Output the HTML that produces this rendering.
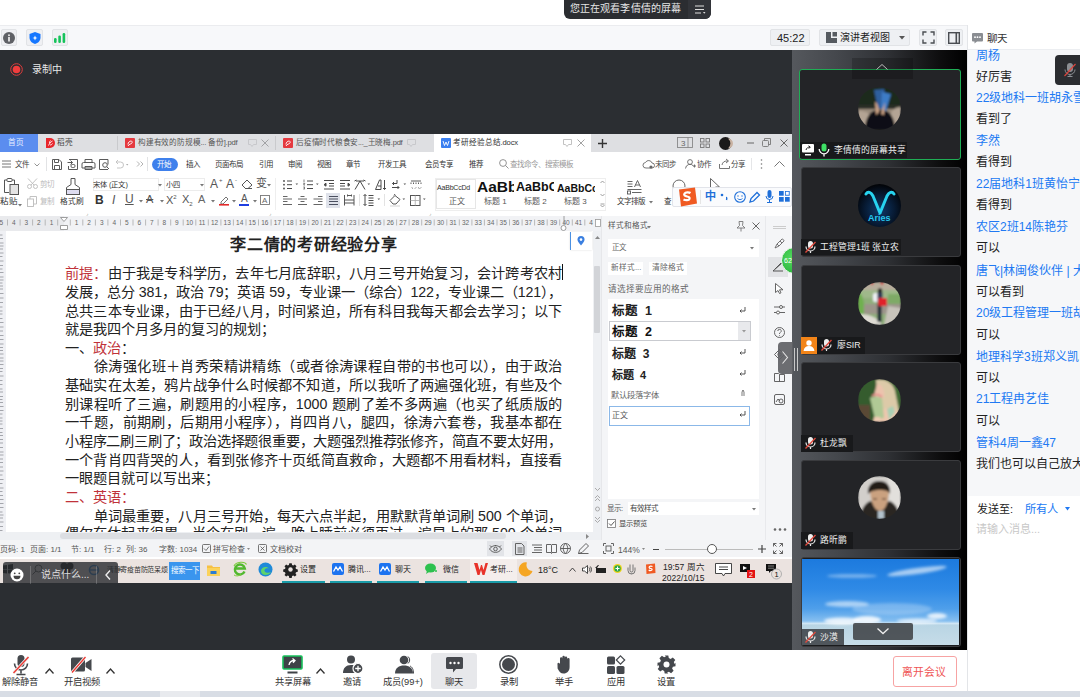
<!DOCTYPE html>
<html lang="zh-CN"><head><meta charset="utf-8">
<style>
*{margin:0;padding:0;box-sizing:border-box}
html,body{width:1080px;height:697px;overflow:hidden;background:#fff;font-family:"Liberation Sans",sans-serif;position:relative}
.a{position:absolute}
.t{position:absolute;white-space:nowrap;line-height:1}
svg{position:absolute;overflow:visible}
.btn{position:absolute;background:#eef0f3;border:1px solid #e1e3e6;border-radius:2px}
.cb{position:absolute;left:976px;font-size:12px;white-space:nowrap;line-height:1;color:#2079f3}
.ck{position:absolute;left:976px;font-size:12px;white-space:nowrap;line-height:1;color:#222}
.bl{position:absolute;font-size:9.3px;color:#333;white-space:nowrap;line-height:1}
.dl{position:absolute;left:65px;width:497px;font-family:"Liberation Sans",sans-serif;font-size:14.2px;line-height:1;color:#222;white-space:nowrap;text-align:justify;text-align-last:justify}
</style></head><body>
<!-- ===== top white band ===== -->
<div class="a" style="left:0;top:0;width:1080px;height:25px;background:#fff"></div>
<!-- tooltip -->
<div class="a" style="left:564px;top:0;width:147px;height:19px;background:#2b2d31;border-radius:0 0 6px 6px"></div>
<div class="a" style="left:688px;top:0;width:23px;height:19px;background:#323439;border-radius:0 0 6px 0"></div>
<div class="t" style="left:570px;top:4px;font-size:10px;letter-spacing:0.1px;color:#e6e6e6">您正在观看李倩倩的屏幕</div>
<svg style="left:695px;top:5px" width="12" height="10"><path d="M0 1h9M0 4.5h9M0 8h6" stroke="#ddd" stroke-width="1.2"/><path d="M8 7l2.5 0-1.25 1.8z" fill="#ddd"/></svg>

<!-- ===== toolbar row ===== -->
<div class="a" style="left:0;top:25px;width:968px;height:25px;background:#f7f8fa;border-top:1px solid #ebecef"></div>
<div class="btn" style="left:1px;top:29px;width:16px;height:17px;background:#eff0f3"></div>
<div class="btn" style="left:26px;top:29px;width:17px;height:17px;background:#eff0f3"></div>
<div class="btn" style="left:52px;top:29px;width:16px;height:17px;background:#eff0f3"></div>
<svg style="left:3px;top:31.5px" width="12" height="12"><circle cx="6" cy="6" r="6" fill="#5f6166"/><rect x="5.1" y="5" width="1.8" height="4.5" fill="#e8e8e8"/><circle cx="6" cy="3.2" r="1" fill="#e8e8e8"/></svg>
<svg style="left:29px;top:31.5px" width="12" height="12"><path d="M6 0L0.5 2v3.5C0.5 9 3 11 6 12c3-1 5.5-3 5.5-6.5V2z" fill="#1677ff"/><path d="M6 3.5L6.8 5.6 8.6 6 6.8 6.6 6 8.5 5.2 6.6 3.4 6 5.2 5.6z" fill="#fff"/></svg>
<svg style="left:54px;top:33px" width="12" height="10"><rect x="0" y="5" width="2.6" height="5" rx="1.2" fill="#16c35b"/><rect x="4.3" y="2.5" width="2.6" height="7.5" rx="1.2" fill="#16c35b"/><rect x="8.6" y="0" width="2.6" height="10" rx="1.2" fill="#16c35b"/></svg>

<div class="btn" style="left:770px;top:29px;width:40px;height:17px"></div>
<div class="t" style="left:777px;top:32.5px;font-size:11px;color:#222">45:22</div>
<div class="btn" style="left:819px;top:29px;width:91px;height:17px"></div>
<svg style="left:826px;top:32px" width="11" height="11"><path d="M0 0h5v6h6v5H0z" fill="#555a60"/><rect x="6.5" y="0" width="4.5" height="4.5" fill="#555a60"/></svg>
<div class="t" style="left:840px;top:32.5px;font-size:10px;color:#222">演讲者视图</div>
<svg style="left:899px;top:36px" width="6" height="4"><path d="M0 0h6L3 3.5z" fill="#555"/></svg>
<div class="btn" style="left:919px;top:29px;width:18px;height:17px"></div>
<svg style="left:922.5px;top:32px" width="11" height="11"><path d="M0 3.5V0h3.5M7.5 0H11v3.5M11 7.5V11H7.5M3.5 11H0V7.5" fill="none" stroke="#4a4d52" stroke-width="1.4"/></svg>
<div class="btn" style="left:945px;top:29px;width:18px;height:17px"></div>
<svg style="left:948px;top:31.5px" width="12" height="12"><rect x="0.7" y="0.7" width="10.6" height="10.6" fill="none" stroke="#4a4d52" stroke-width="1.4"/><rect x="7.5" y="0.7" width="1.6" height="10.6" fill="#4a4d52"/></svg>

<!-- ===== dark stage ===== -->
<div class="a" style="left:0;top:50px;width:792px;height:600px;background:#2b2e32"></div>
<svg style="left:10px;top:63px" width="13" height="13"><circle cx="6.5" cy="6.5" r="5.8" fill="none" stroke="#e23c3c" stroke-width="1"/><circle cx="6.5" cy="6.5" r="3.8" fill="#f03d3d"/></svg>
<div class="t" style="left:32px;top:65px;font-size:10px;color:#e8e8e8">录制中</div>

<!-- ===== video column ===== -->
<div class="a" style="left:792px;top:50px;width:175px;height:600px;background:linear-gradient(90deg,#55585d 0%,#45484d 25%,#2e3034 55%,#0d0d0e 85%,#000 100%)"></div>

<!-- ===== WPS (shared screen) ===== -->
<div id="wps" class="a" style="left:0;top:134px;width:792px;height:449px;background:#fff;overflow:hidden"></div>
<!-- WPS tab bar -->
<div class="a" style="left:0;top:134px;width:792px;height:18px;background:#dedfe2"></div>
<div class="a" style="left:0;top:134px;width:38px;height:18px;background:#5b8def"></div>
<div class="t" style="left:8px;top:139px;font-size:7.6px;color:#e9efff">首页</div>
<svg style="left:46px;top:138px" width="10" height="10"><path d="M0 0h4a5 5 0 0 1 0 10H0z" fill="#e8262c"/><path d="M2.5 7.5c1-2 2-3.5 4-4.5M3.5 5c0-1 .5-2 1-2.5M4 7c1 0 2-.5 2.5-1.5" stroke="#fff" stroke-width="0.9" fill="none"/></svg>
<div class="t" style="left:57px;top:139px;font-size:7.6px;color:#444">稻壳</div>
<div class="a" style="left:117px;top:136px;width:1px;height:14px;background:#c9cacd"></div>
<svg style="left:125px;top:138px" width="10" height="10"><rect width="10" height="10" rx="1" fill="#e5393f"/><path d="M3 6.5c0-2 1.5-3.5 3-3.5 1 0 1.5 1 1 2S4 6 3 8" stroke="#fff" stroke-width="0.9" fill="none"/></svg>
<div class="t" style="left:138px;top:139px;font-size:7.6px;letter-spacing:-0.2px;color:#555">构建有效的防规模... 备份].pdf</div>
<svg style="left:248px;top:139px" width="9" height="8"><path d="M0.5 0.5h8v5h-3l-1.5 2-1.5-2h-2z" fill="none" stroke="#c4c5c8" stroke-width="0.9"/></svg>
<svg style="left:261px;top:139px" width="8" height="8"><path d="M0.5 0.5l7 7M7.5 0.5l-7 7" stroke="#9a9b9e" stroke-width="0.9"/></svg>
<div class="a" style="left:275px;top:136px;width:1px;height:14px;background:#c9cacd"></div>
<svg style="left:283px;top:138px" width="10" height="10"><rect width="10" height="10" rx="1" fill="#e5393f"/><path d="M3 6.5c0-2 1.5-3.5 3-3.5 1 0 1.5 1 1 2S4 6 3 8" stroke="#fff" stroke-width="0.9" fill="none"/></svg>
<div class="t" style="left:296px;top:139px;font-size:7.6px;letter-spacing:-0.25px;color:#555">后疫情时代粮食安..._王晓梅.pdf</div>
<svg style="left:407px;top:139px" width="9" height="8"><path d="M0.5 0.5h8v5h-3l-1.5 2-1.5-2h-2z" fill="none" stroke="#c4c5c8" stroke-width="0.9"/></svg>
<div class="a" style="left:434px;top:134px;width:157px;height:18px;background:#fff"></div>
<svg style="left:441px;top:138px" width="10" height="10"><rect width="10" height="10" rx="1" fill="#3a7ff0"/><path d="M2 3l1.5 4.5L5 4l1.5 3.5L8 3" stroke="#fff" stroke-width="0.9" fill="none"/></svg>
<div class="t" style="left:453px;top:139px;font-size:7.6px;letter-spacing:-0.1px;color:#333">考研经验总结.docx</div>
<svg style="left:563px;top:139px" width="9" height="8"><path d="M0.5 0.5h8v5h-3l-1.5 2-1.5-2h-2z" fill="none" stroke="#bbb" stroke-width="0.9"/></svg>
<svg style="left:577px;top:139px" width="8" height="8"><path d="M0.5 0.5l7 7M7.5 0.5l-7 7" stroke="#999" stroke-width="0.9"/></svg>
<svg style="left:598px;top:139px" width="9" height="9"><path d="M4.5 0v9M0 4.5h9" stroke="#333" stroke-width="1.4"/></svg>
<svg style="left:677px;top:137px" width="16" height="11"><rect x="0.5" y="0.5" width="15" height="10" fill="none" stroke="#888" stroke-width="0.9"/><path d="M11 0.5v10" stroke="#888" stroke-width="0.9"/><text x="4" y="8.5" font-size="8" fill="#666" font-family="Liberation Sans">3</text></svg>
<svg style="left:700px;top:138px" width="10" height="10"><rect x="0.5" y="0.5" width="3.5" height="3.5" fill="none" stroke="#777" stroke-width="0.9"/><rect x="6" y="0.5" width="3.5" height="3.5" fill="none" stroke="#777" stroke-width="0.9"/><rect x="0.5" y="6" width="3.5" height="3.5" fill="none" stroke="#777" stroke-width="0.9"/><rect x="6" y="6" width="3.5" height="3.5" fill="none" stroke="#777" stroke-width="0.9"/></svg>
<svg style="left:718.5px;top:136.5px" width="13" height="13"><circle cx="6.5" cy="6.5" r="6.5" fill="#1b1a1a"/><path d="M9 1.5a6.5 6.5 0 0 1 0 10a5 5 0 0 0 0-10z" fill="#c9b3a3"/></svg>
<svg style="left:747px;top:142px" width="7" height="2"><path d="M0 1h7" stroke="#666" stroke-width="1"/></svg>
<svg style="left:762px;top:138px" width="9" height="9"><rect x="0.5" y="2.5" width="6" height="6" rx="1" fill="none" stroke="#777" stroke-width="0.9"/><path d="M2.5 2.5v-2h6v6h-2" fill="none" stroke="#777" stroke-width="0.9"/></svg>
<svg style="left:780px;top:138.5px" width="8" height="8"><path d="M0.5 0.5l7 7M7.5 0.5l-7 7" stroke="#666" stroke-width="1"/></svg>

<!-- menu row -->
<svg style="left:2px;top:160px" width="9" height="8"><path d="M0 1h9M0 4h9M0 7h9" stroke="#666" stroke-width="0.9"/></svg>
<div class="t" style="left:15px;top:160.5px;font-size:7.5px;color:#444">文件</div>
<svg style="left:34px;top:163px" width="6" height="4"><path d="M0.5 0.5l2.5 2.5 2.5-2.5" stroke="#888" stroke-width="0.9" fill="none"/></svg>
<div class="a" style="left:46px;top:157px;width:1px;height:14px;background:#e2e3e5"></div>
<svg style="left:50px;top:158px" width="95" height="13" fill="none" stroke="#5a5a5a" stroke-width="1">
<path d="M2.5 1.5h6.5l2.5 2.5v7.5h-9z M4.5 1.5v3h4v-3 M4.5 11.5v-4h5v4"/>
<path d="M19 1.5h8.5v10h-9v-3.5M17.5 4.5h5M20.5 2.5l2 2-2 2"/><rect x="21" y="6.5" width="4" height="3" rx="1.3"/>
<path d="M33.5 4.5h10a1.5 1.5 0 0 1 1.5 1.5v4h-13v-4a1.5 1.5 0 0 1 1.5-1.5z M35 4.5V1.5h7v3 M35 8.5h7v3h-7z"/>
<path d="M58 11.5h-8.5v-10h8.5v5"/><circle cx="55" cy="7" r="2.3"/><path d="M56.7 8.7l2.3 2.3"/>
<path d="M66 4h4.5a3 3 0 0 1 0 6H67M66 4l2-2M66 4l2 2" stroke="#c5c5c5"/>
<path d="M76 6h2.4l-1.2 1.5z" fill="#aaa" stroke="none"/>
<path d="M87 3.5l2.5 2.5-2.5 2.5M90.5 3.5L93 6l-2.5 2.5" stroke="#aaa" stroke-width="0.9"/>
</svg>
<div class="a" style="left:147px;top:157px;width:1px;height:14px;background:#e2e3e5"></div>
<div class="a" style="left:152px;top:158px;width:26px;height:13px;background:#3e80ec;border-radius:7px"></div>
<div class="t" style="left:157px;top:161px;font-size:7.5px;color:#fff">开始</div>
<div class="t" style="left:186px;top:161px;font-size:7.5px;color:#333">插入</div>
<div class="t" style="left:215px;top:161px;font-size:7.5px;color:#333">页面布局</div>
<div class="t" style="left:259px;top:161px;font-size:7.5px;color:#333">引用</div>
<div class="t" style="left:288px;top:161px;font-size:7.5px;color:#333">审阅</div>
<div class="t" style="left:317px;top:161px;font-size:7.5px;color:#333">视图</div>
<div class="t" style="left:346px;top:161px;font-size:7.5px;color:#333">章节</div>
<div class="t" style="left:378px;top:161px;font-size:7.5px;color:#333">开发工具</div>
<div class="t" style="left:425px;top:161px;font-size:7.5px;color:#333">会员专享</div>
<div class="t" style="left:469px;top:161px;font-size:7.5px;color:#333">推荐</div>
<svg style="left:499px;top:159px" width="10" height="10"><circle cx="4" cy="4" r="3.4" fill="none" stroke="#888" stroke-width="0.9"/><path d="M6.5 6.5l3 3" stroke="#888" stroke-width="0.9"/></svg>
<div class="t" style="left:510px;top:161px;font-size:7.5px;color:#999">查找命令、搜索模板</div>
<svg style="left:643px;top:159px" width="11" height="10"><path d="M3 9h6a2.5 2.5 0 0 0 0-5 3.5 3.5 0 0 0-6.5-.5A2.7 2.7 0 0 0 3 9z" fill="none" stroke="#666" stroke-width="0.9"/><circle cx="8" cy="8" r="1.6" fill="#666"/></svg>
<div class="t" style="left:655px;top:161px;font-size:7.5px;color:#444">未同步</div>
<svg style="left:685px;top:159px" width="11" height="10"><circle cx="5" cy="3" r="2.4" fill="none" stroke="#666" stroke-width="0.9"/><path d="M0.5 9.5a4.5 4.5 0 0 1 8-2.5M8 7h3M9.5 5.5v3" fill="none" stroke="#666" stroke-width="0.9"/></svg>
<div class="t" style="left:697px;top:161px;font-size:7.5px;color:#444">协作</div>
<svg style="left:719px;top:159px" width="11" height="10"><path d="M0.5 5v4.5h10V7M3 6a5 5 0 0 1 5-4h1M7 0l2.5 2L7 4" fill="none" stroke="#666" stroke-width="0.9"/></svg>
<div class="t" style="left:731px;top:161px;font-size:7.5px;color:#444">分享</div>
<div class="a" style="left:751px;top:158px;width:1px;height:12px;background:#e5e6e8"></div>
<svg style="left:760px;top:159px" width="3" height="10"><circle cx="1.5" cy="1" r="0.8" fill="#777"/><circle cx="1.5" cy="5" r="0.8" fill="#777"/><circle cx="1.5" cy="9" r="0.8" fill="#777"/></svg>
<svg style="left:774px;top:161px" width="11" height="6"><path d="M0.5 5.5l5-5 5 5" fill="none" stroke="#666" stroke-width="0.9"/></svg>

<!-- ribbon -->
<svg style="left:3px;top:178px" width="16" height="17"><path d="M4 2H1.5v12.5H6M9 2h2.5v4" fill="none" stroke="#555" stroke-width="1"/><rect x="4" y="0.5" width="5" height="3" rx="0.8" fill="#fff" stroke="#555" stroke-width="1"/><rect x="7" y="6.5" width="8.5" height="10" fill="#e4e4e4" stroke="#555" stroke-width="1"/></svg>
<div class="t" style="left:0;top:197px;font-size:8.5px;color:#333">粘贴</div>
<svg style="left:18px;top:204px" width="4" height="3"><path d="M0 0h4L2 2.5z" fill="#777"/></svg>
<svg style="left:27px;top:178px" width="11" height="11"><circle cx="2.5" cy="8.5" r="2" fill="none" stroke="#bbb" stroke-width="0.9"/><circle cx="8.5" cy="8.5" r="2" fill="none" stroke="#bbb" stroke-width="0.9"/><path d="M1 0.5l6 6.5M10 0.5L4 7" stroke="#bbb" stroke-width="0.9"/></svg>
<div class="t" style="left:40px;top:180.5px;font-size:7.5px;color:#bbb">剪切</div>
<svg style="left:27px;top:196px" width="10" height="11"><rect x="0.5" y="3" width="6" height="7.5" fill="none" stroke="#bbb" stroke-width="0.9"/><path d="M3 3V0.5h6.5v7.5H7" fill="none" stroke="#bbb" stroke-width="0.9"/></svg>
<div class="t" style="left:40px;top:197.5px;font-size:7.5px;color:#bbb">复制</div>
<svg style="left:65px;top:178px" width="16" height="17"><path d="M6 0.5h4v6l4.5 3v2h-13v-2l4.5-3z" fill="none" stroke="#555" stroke-width="1"/><rect x="1.5" y="11.5" width="13" height="5" fill="#dedcf0" stroke="#555" stroke-width="1"/></svg>
<div class="t" style="left:60px;top:197.5px;font-size:7.7px;color:#333">格式刷</div>
<div class="a" style="left:93px;top:178px;width:66px;height:13px;background:#fff;border:1px solid #ececec"></div>
<div class="t" style="left:93px;top:180.5px;font-size:7.3px;color:#333">宋体 (正文)</div>
<svg style="left:158px;top:184px" width="4" height="3"><path d="M0 0h4L2 2.5z" fill="#777"/></svg>
<div class="a" style="left:164px;top:178px;width:41px;height:13px;background:#fff;border:1px solid #ececec"></div>
<div class="t" style="left:166px;top:180.5px;font-size:7.3px;color:#333">小四</div>
<svg style="left:200px;top:184px" width="4" height="3"><path d="M0 0h4L2 2.5z" fill="#777"/></svg>
<div class="t" style="left:210px;top:178px;font-size:12px;color:#555">A</div>
<div class="t" style="left:219px;top:177px;font-size:6px;color:#555">+</div>
<div class="t" style="left:226px;top:178px;font-size:12px;color:#555">A</div>
<div class="t" style="left:235px;top:177px;font-size:6px;color:#555">-</div>
<svg style="left:241px;top:179px" width="12" height="10"><path d="M4 9.5h7M1 6l5-5 5 5-4 3.5H4.5z" fill="none" stroke="#555" stroke-width="1"/></svg>
<div class="t" style="left:256px;top:178px;font-size:11px;color:#555">变</div>
<svg style="left:267px;top:184px" width="4" height="3"><path d="M0 0h4L2 2.5z" fill="#777"/></svg>
<div class="t" style="left:95px;top:194px;font-size:12px;font-weight:bold;color:#333">B</div>
<div class="t" style="left:112px;top:194px;font-size:12px;font-style:italic;color:#555">I</div>
<div class="t" style="left:125px;top:193px;font-size:12px;color:#555;text-decoration:underline">U</div>
<svg style="left:139px;top:200px" width="4" height="3"><path d="M0 0h4L2 2.5z" fill="#777"/></svg>
<div class="t" style="left:146px;top:194px;font-size:11px;color:#555;text-decoration:line-through">A</div>
<svg style="left:160px;top:200px" width="4" height="3"><path d="M0 0h4L2 2.5z" fill="#777"/></svg>
<div class="t" style="left:166px;top:194px;font-size:11px;color:#555">X<sup style="font-size:6px">2</sup></div>
<div class="t" style="left:182px;top:194px;font-size:11px;color:#555">X<sub style="font-size:6px">2</sub></div>
<div class="t" style="left:198px;top:194px;font-size:11px;color:#666">A</div>
<svg style="left:211px;top:200px" width="4" height="3"><path d="M0 0h4L2 2.5z" fill="#777"/></svg>
<svg style="left:219px;top:195px" width="11" height="11"><path d="M2 7l5-5 2 2-5 5H2z" fill="none" stroke="#666" stroke-width="0.9"/><rect x="0" y="9" width="10" height="1.6" fill="#e32b2b"/></svg>
<svg style="left:232px;top:200px" width="4" height="3"><path d="M0 0h4L2 2.5z" fill="#777"/></svg>
<div class="t" style="left:241px;top:194px;font-size:10px;color:#555">A</div>
<div class="a" style="left:239px;top:204px;width:10px;height:1.6px;background:#1f3ee0"></div>
<svg style="left:253px;top:200px" width="4" height="3"><path d="M0 0h4L2 2.5z" fill="#777"/></svg>
<svg style="left:260px;top:195px" width="10" height="10"><rect x="0.5" y="0.5" width="9" height="9" fill="none" stroke="#777" stroke-width="0.9"/><text x="2" y="8" font-size="8" fill="#666" font-family="Liberation Sans">A</text></svg>
<div class="a" style="left:275px;top:178px;width:1px;height:32px;background:#eee"></div>
<!-- para icons row1 -->
<svg style="left:270px;top:170px" width="160" height="42" fill="none" stroke="#4a4a4a" stroke-width="1">
<g fill="#4a4a4a" stroke="none"><circle cx="14" cy="11" r="0.9"/><circle cx="14" cy="14.7" r="0.9"/><circle cx="14" cy="18.5" r="0.9"/></g>
<path d="M17 11h5M17 14.7h5M17 18.5h5"/><path d="M25.5 13.5h2.6l-1.3 1.6z" fill="#555" stroke="none"/>
<path d="M34 9.5v3M33.3 13.5h1.5l-1.3 1.5h1.5M33.3 17h1.5l-.8 1 .8 1h-1.5" stroke-width="0.7"/><path d="M37 11h6M37 14.7h6M37 18.5h6"/><path d="M46.0 13.5h2.6l-1.3 1.6z" fill="#555" stroke="none"/>
<path d="M54 10.5h10M59 13.5h5M59 16h5M54 19h10"/><path d="M54 14.7l2-1.5v3z" fill="#4a4a4a"/>
<path d="M70 10.5h10M70 13.5h5M70 16h5M70 19h10"/><path d="M80 14.7l-2-1.5v3z" fill="#4a4a4a"/>
<path d="M85 19.5l5-8.5 5 8.5M84.5 11l2-1M95.5 11l-2-1M86 11h8" /><path d="M97.5 13.5h2.6l-1.3 1.6z" fill="#555" stroke="none"/>
<path d="M105.5 19.5l4-9.5h1.5v9.5zM108 16h3M114.5 10v9.5M113 18l1.5 1.5 1.5-1.5"/>
<path d="M127 10v3.5h-4.5M124 12l-1.5 1.5 1.5 1.5M122 17.5h7M127.5 16l1.5 1.5-1.5 1.5"/><path d="M133.5 13.5h2.6l-1.3 1.6z" fill="#555" stroke="none"/>
<path d="M141 11h10M141 12.5v1.5M143.5 12.5v1.5M146 12.5v1.5M148.5 12.5v1.5M151 12.5v1.5M142 17.5l.5 1M145 18.5l1-1M148.5 17.5l.5 1M150 18.5l1-1" stroke-width="0.9"/>
<path d="M13 26.5h4.5M13 29h9M13 31.5h4.5M13 34.5h9" stroke="#666"/>
<path d="M30.5 26.5h4M28 29h9M30.5 31.5h4M28 34.5h9" stroke="#666"/>
<path d="M48 26.5h4.5M43.5 29h9M48 31.5h4.5M43.5 34.5h9" stroke="#666"/>
<rect x="56" y="23" width="14" height="15" fill="#dfe2ea" stroke="none"/>
<path d="M59 26.5h9M59 29h9M59 31.5h9M59 34.5h9" stroke="#4a4f5f" stroke-width="1.1"/>
<path d="M74.5 25v10.5M84 25v10.5M74.5 30h9.5M74.5 33h9.5M77 25.5h5M77.5 24.5v2M81.5 24.5v2" stroke="#555"/>
<path d="M89.5 24v12" stroke="#e3e3e3"/>
<path d="M95 24.5v11M93.5 26l1.5-1.5 1.5 1.5M93.5 34l1.5 1.5 1.5-1.5M98.5 25.5h5M98.5 28h5M98.5 30.5h5M98.5 33h5M98.5 35.5h5"/><path d="M107.5 28.5h2.6l-1.3 1.6z" fill="#555" stroke="none"/>
<path d="M114.5 24v12" stroke="#e3e3e3"/>
<path d="M120 30.5l5-5 5 4-4 4.5h-3z M124 25.5l1-1.5" stroke="#555"/><path d="M120 36h10" stroke="#ddd" stroke-width="1.3"/><path d="M132.5 28.5h2.6l-1.3 1.6z" fill="#555" stroke="none"/>
<rect x="140.5" y="25.5" width="9.5" height="10" stroke="#555"/><path d="M145.25 25.5v10M140.5 30.5h9.5" stroke="#aaa" stroke-width="0.8"/><path d="M153.0 28.5h2.6l-1.3 1.6z" fill="#555" stroke="none"/>
</svg>
<!-- style gallery -->
<div class="a" style="left:435px;top:178px;width:171px;height:33px;background:#fff;border:1px solid #eeeeee"></div>
<div class="a" style="left:436px;top:179px;width:40px;height:30px;background:#fff;border:1px solid #e6e6e6"></div>
<div class="t" style="left:437px;top:184px;font-size:7px;color:#333;letter-spacing:-0.2px">AaBbCcDd</div>
<div class="t" style="left:449px;top:198px;font-size:8px;color:#555">正文</div>
<div class="t" style="left:477px;top:179px;font-size:15.5px;font-weight:bold;color:#111;width:37px;overflow:hidden">AaBb</div>
<div class="t" style="left:484px;top:198px;font-size:8px;color:#555">标题 1</div>
<div class="t" style="left:516px;top:181px;font-size:12.5px;font-weight:bold;color:#111;width:38px;overflow:hidden">AaBbC</div>
<div class="t" style="left:524px;top:198px;font-size:8px;color:#555">标题 2</div>
<div class="t" style="left:557px;top:183px;font-size:10.5px;font-weight:bold;color:#111;width:38px;overflow:hidden">AaBbCc</div>
<div class="t" style="left:564px;top:198px;font-size:8px;color:#555">标题 3</div>
<svg style="left:600px;top:180px" width="5" height="28"><path d="M0.5 3l2-2 2 2M0.5 14l2 2 2-2M0.5 24h4M0.5 25l2 2 2-2" fill="none" stroke="#888" stroke-width="0.8"/></svg>
<svg style="left:627px;top:180px" width="15" height="15" stroke="#555" stroke-width="0.9" fill="none"><path d="M0.5 1.5h5M0.5 4h5M0.5 6.5h5M0.5 9.5h14M5 12.5h9.5M7.5 7l3-6.5 3 6.5M8.5 5h4"/><rect x="0.5" y="11" width="3" height="3"/></svg>
<div class="t" style="left:617px;top:197.5px;font-size:7.5px;color:#333">文字排版</div>
<svg style="left:649px;top:201px" width="4" height="3"><path d="M0 0h4L2 2.5z" fill="#777"/></svg>
<svg style="left:672px;top:179px" width="16" height="14"><circle cx="7" cy="7" r="6" fill="none" stroke="#666" stroke-width="1"/></svg>
<svg style="left:710px;top:178px" width="12" height="14"><path d="M0.5 0.5v12l3-2.5 2 3.5 2-1-2-3.5h4z" fill="#fff" stroke="#555" stroke-width="0.9"/></svg>
<div class="t" style="left:664px;top:197.5px;font-size:7.5px;color:#333">查</div>
<!-- sogou IME bar -->
<div class="a" style="left:672px;top:187px;width:120px;height:20px;background:#fafbfd;border:1px solid #e2e4ea;border-radius:2px"></div>
<svg style="left:676px;top:187px" width="22" height="20"><path d="M3 2.5l16-2 2 16-16 3z" fill="#f05a22"/><path d="M14.5 6c-1.5-1-5-1-6 .5s.5 2.5 2.5 3 3 1 2.5 2.5-4 1.5-6 .5" fill="none" stroke="#fff" stroke-width="2.2"/></svg>
<div class="a" style="left:700px;top:190px;width:1px;height:14px;background:#e5e5e5"></div>
<div class="t" style="left:705px;top:191px;font-size:11px;font-weight:bold;color:#1e6fd9">中</div>
<svg style="left:720px;top:193px" width="8" height="8"><circle cx="2" cy="2" r="1.3" fill="#1e6fd9"/><path d="M6 4.5c.8 0 1 .5.5 2.5" stroke="#1e6fd9" stroke-width="1.4" fill="none"/></svg>
<svg style="left:734px;top:191px" width="12" height="12"><circle cx="6" cy="6" r="5.3" fill="none" stroke="#1e6fd9" stroke-width="1.1"/><circle cx="4" cy="5" r="0.7" fill="#1e6fd9"/><circle cx="8" cy="5" r="0.7" fill="#1e6fd9"/><path d="M3.5 7.5c1.5 1.5 3.5 1.5 5 0" fill="none" stroke="#1e6fd9" stroke-width="0.9"/></svg>
<svg style="left:749px;top:191px" width="12" height="12"><path d="M1 11l1-3.5 6-6 2.5 2.5-6 6z" fill="none" stroke="#1e6fd9" stroke-width="1.3"/></svg>
<svg style="left:765px;top:190px" width="9" height="13"><rect x="2.5" y="0" width="4" height="8" rx="2" fill="#1e6fd9"/><path d="M1 6a3.5 3.5 0 0 0 7 0M4.5 9.5V12M2 12.5h5" fill="none" stroke="#1e6fd9" stroke-width="1"/></svg>
<svg style="left:779px;top:191px" width="11" height="11"><rect x="0" y="0" width="4.7" height="4.7" fill="#1e6fd9"/><rect x="6" y="0" width="4.7" height="4.7" fill="#1e6fd9"/><rect x="0" y="6" width="4.7" height="4.7" fill="#1e6fd9"/><rect x="6" y="6" width="4.7" height="4.7" fill="#1e6fd9"/><rect x="6.8" y="0.8" width="3" height="3" fill="#fff"/></svg>
<div class="t" style="left:86px;top:211px;font-size:5px;color:#777">⌟</div>
<div class="t" style="left:269px;top:211px;font-size:5px;color:#777">⌟</div>
<div class="t" style="left:429px;top:211px;font-size:5px;color:#777">⌟</div>

<div class="a" style="left:0;top:216px;width:601px;height:15px;background:#f1f2f5"></div>
<div class="a" style="left:0;top:216px;width:64px;height:15px;background:#e9eaed"></div>
<svg style="left:0;top:216px" width="601" height="15"><text x="1.2" y="8.5" font-size="6.5" fill="#666" text-anchor="middle" font-family="Liberation Sans">5</text><path d="M7.5 3.5v6" stroke="#aaa" stroke-width="0.8"/><text x="13.8" y="8.5" font-size="6.5" fill="#666" text-anchor="middle" font-family="Liberation Sans">4</text><path d="M20.1 3.5v6" stroke="#aaa" stroke-width="0.8"/><text x="26.3" y="8.5" font-size="6.5" fill="#666" text-anchor="middle" font-family="Liberation Sans">3</text><path d="M32.6 3.5v6" stroke="#aaa" stroke-width="0.8"/><text x="38.9" y="8.5" font-size="6.5" fill="#666" text-anchor="middle" font-family="Liberation Sans">2</text><path d="M45.2 3.5v6" stroke="#aaa" stroke-width="0.8"/><text x="51.5" y="8.5" font-size="6.5" fill="#666" text-anchor="middle" font-family="Liberation Sans">1</text><path d="M57.7 3.5v6" stroke="#aaa" stroke-width="0.8"/><path d="M70.3 3.5v6" stroke="#aaa" stroke-width="0.8"/><text x="76.5" y="8.5" font-size="6.5" fill="#666" text-anchor="middle" font-family="Liberation Sans">1</text><path d="M82.8 3.5v6" stroke="#aaa" stroke-width="0.8"/><text x="89.1" y="8.5" font-size="6.5" fill="#666" text-anchor="middle" font-family="Liberation Sans">2</text><path d="M95.4 3.5v6" stroke="#aaa" stroke-width="0.8"/><text x="101.7" y="8.5" font-size="6.5" fill="#666" text-anchor="middle" font-family="Liberation Sans">3</text><path d="M107.9 3.5v6" stroke="#aaa" stroke-width="0.8"/><text x="114.2" y="8.5" font-size="6.5" fill="#666" text-anchor="middle" font-family="Liberation Sans">4</text><path d="M120.5 3.5v6" stroke="#aaa" stroke-width="0.8"/><text x="126.8" y="8.5" font-size="6.5" fill="#666" text-anchor="middle" font-family="Liberation Sans">5</text><path d="M133.0 3.5v6" stroke="#aaa" stroke-width="0.8"/><text x="139.3" y="8.5" font-size="6.5" fill="#666" text-anchor="middle" font-family="Liberation Sans">6</text><path d="M145.6 3.5v6" stroke="#aaa" stroke-width="0.8"/><text x="151.9" y="8.5" font-size="6.5" fill="#666" text-anchor="middle" font-family="Liberation Sans">7</text><path d="M158.1 3.5v6" stroke="#aaa" stroke-width="0.8"/><text x="164.4" y="8.5" font-size="6.5" fill="#666" text-anchor="middle" font-family="Liberation Sans">8</text><path d="M170.7 3.5v6" stroke="#aaa" stroke-width="0.8"/><text x="176.9" y="8.5" font-size="6.5" fill="#666" text-anchor="middle" font-family="Liberation Sans">9</text><path d="M183.2 3.5v6" stroke="#aaa" stroke-width="0.8"/><text x="189.5" y="8.5" font-size="6.5" fill="#666" text-anchor="middle" font-family="Liberation Sans">10</text><path d="M195.8 3.5v6" stroke="#aaa" stroke-width="0.8"/><text x="202.1" y="8.5" font-size="6.5" fill="#666" text-anchor="middle" font-family="Liberation Sans">11</text><path d="M208.3 3.5v6" stroke="#aaa" stroke-width="0.8"/><text x="214.6" y="8.5" font-size="6.5" fill="#666" text-anchor="middle" font-family="Liberation Sans">12</text><path d="M220.9 3.5v6" stroke="#aaa" stroke-width="0.8"/><text x="227.2" y="8.5" font-size="6.5" fill="#666" text-anchor="middle" font-family="Liberation Sans">13</text><path d="M233.4 3.5v6" stroke="#aaa" stroke-width="0.8"/><text x="239.7" y="8.5" font-size="6.5" fill="#666" text-anchor="middle" font-family="Liberation Sans">14</text><path d="M246.0 3.5v6" stroke="#aaa" stroke-width="0.8"/><text x="252.2" y="8.5" font-size="6.5" fill="#666" text-anchor="middle" font-family="Liberation Sans">15</text><path d="M258.5 3.5v6" stroke="#aaa" stroke-width="0.8"/><text x="264.8" y="8.5" font-size="6.5" fill="#666" text-anchor="middle" font-family="Liberation Sans">16</text><path d="M271.1 3.5v6" stroke="#aaa" stroke-width="0.8"/><text x="277.4" y="8.5" font-size="6.5" fill="#666" text-anchor="middle" font-family="Liberation Sans">17</text><path d="M283.6 3.5v6" stroke="#aaa" stroke-width="0.8"/><text x="289.9" y="8.5" font-size="6.5" fill="#666" text-anchor="middle" font-family="Liberation Sans">18</text><path d="M296.2 3.5v6" stroke="#aaa" stroke-width="0.8"/><text x="302.5" y="8.5" font-size="6.5" fill="#666" text-anchor="middle" font-family="Liberation Sans">19</text><path d="M308.7 3.5v6" stroke="#aaa" stroke-width="0.8"/><text x="315.0" y="8.5" font-size="6.5" fill="#666" text-anchor="middle" font-family="Liberation Sans">20</text><path d="M321.3 3.5v6" stroke="#aaa" stroke-width="0.8"/><text x="327.6" y="8.5" font-size="6.5" fill="#666" text-anchor="middle" font-family="Liberation Sans">21</text><path d="M333.8 3.5v6" stroke="#aaa" stroke-width="0.8"/><text x="340.1" y="8.5" font-size="6.5" fill="#666" text-anchor="middle" font-family="Liberation Sans">22</text><path d="M346.4 3.5v6" stroke="#aaa" stroke-width="0.8"/><text x="352.7" y="8.5" font-size="6.5" fill="#666" text-anchor="middle" font-family="Liberation Sans">23</text><path d="M358.9 3.5v6" stroke="#aaa" stroke-width="0.8"/><text x="365.2" y="8.5" font-size="6.5" fill="#666" text-anchor="middle" font-family="Liberation Sans">24</text><path d="M371.5 3.5v6" stroke="#aaa" stroke-width="0.8"/><text x="377.8" y="8.5" font-size="6.5" fill="#666" text-anchor="middle" font-family="Liberation Sans">25</text><path d="M384.0 3.5v6" stroke="#aaa" stroke-width="0.8"/><text x="390.3" y="8.5" font-size="6.5" fill="#666" text-anchor="middle" font-family="Liberation Sans">26</text><path d="M396.6 3.5v6" stroke="#aaa" stroke-width="0.8"/><text x="402.9" y="8.5" font-size="6.5" fill="#666" text-anchor="middle" font-family="Liberation Sans">27</text><path d="M409.1 3.5v6" stroke="#aaa" stroke-width="0.8"/><text x="415.4" y="8.5" font-size="6.5" fill="#666" text-anchor="middle" font-family="Liberation Sans">28</text><path d="M421.7 3.5v6" stroke="#aaa" stroke-width="0.8"/><text x="428.0" y="8.5" font-size="6.5" fill="#666" text-anchor="middle" font-family="Liberation Sans">29</text><path d="M434.2 3.5v6" stroke="#aaa" stroke-width="0.8"/><text x="440.5" y="8.5" font-size="6.5" fill="#666" text-anchor="middle" font-family="Liberation Sans">30</text><path d="M446.8 3.5v6" stroke="#aaa" stroke-width="0.8"/><text x="453.1" y="8.5" font-size="6.5" fill="#666" text-anchor="middle" font-family="Liberation Sans">31</text><path d="M459.3 3.5v6" stroke="#aaa" stroke-width="0.8"/><text x="465.6" y="8.5" font-size="6.5" fill="#666" text-anchor="middle" font-family="Liberation Sans">32</text><path d="M471.9 3.5v6" stroke="#aaa" stroke-width="0.8"/><text x="478.2" y="8.5" font-size="6.5" fill="#666" text-anchor="middle" font-family="Liberation Sans">33</text><path d="M484.4 3.5v6" stroke="#aaa" stroke-width="0.8"/><text x="490.7" y="8.5" font-size="6.5" fill="#666" text-anchor="middle" font-family="Liberation Sans">34</text><path d="M497.0 3.5v6" stroke="#aaa" stroke-width="0.8"/><text x="503.2" y="8.5" font-size="6.5" fill="#666" text-anchor="middle" font-family="Liberation Sans">35</text><path d="M509.5 3.5v6" stroke="#aaa" stroke-width="0.8"/><text x="515.8" y="8.5" font-size="6.5" fill="#666" text-anchor="middle" font-family="Liberation Sans">36</text><path d="M522.1 3.5v6" stroke="#aaa" stroke-width="0.8"/><text x="528.4" y="8.5" font-size="6.5" fill="#666" text-anchor="middle" font-family="Liberation Sans">37</text><path d="M534.6 3.5v6" stroke="#aaa" stroke-width="0.8"/><text x="540.9" y="8.5" font-size="6.5" fill="#666" text-anchor="middle" font-family="Liberation Sans">38</text><path d="M547.2 3.5v6" stroke="#aaa" stroke-width="0.8"/><text x="553.5" y="8.5" font-size="6.5" fill="#666" text-anchor="middle" font-family="Liberation Sans">39</text><path d="M559.7 3.5v6" stroke="#aaa" stroke-width="0.8"/><text x="566.0" y="8.5" font-size="6.5" fill="#666" text-anchor="middle" font-family="Liberation Sans">40</text><path d="M572.3 3.5v6" stroke="#aaa" stroke-width="0.8"/><text x="578.6" y="8.5" font-size="6.5" fill="#666" text-anchor="middle" font-family="Liberation Sans">41</text><path d="M584.8 3.5v6" stroke="#aaa" stroke-width="0.8"/><text x="591.1" y="8.5" font-size="6.5" fill="#666" text-anchor="middle" font-family="Liberation Sans">4</text><path d="M60.5 1.5h7l-3.5 4zM60.5 9.5h7v4h-7z" fill="#fff" stroke="#888" stroke-width="0.8"/><path d="M564 0v9M561 12a2.5 2.5 0 1 0 5 0a2.5 2.5 0 1 0-5 0" fill="#fff" stroke="#888" stroke-width="0.8"/><rect x="595.5" y="3.5" width="5" height="7" fill="#fff" stroke="#999" stroke-width="0.8"/></svg>
<!-- doc area -->
<div class="a" style="left:0;top:231px;width:6px;height:301px;background:#eff0f4"></div>
<svg style="left:0;top:232px" width="8" height="300"><path d="M0 3.0h2.5M0 6.5h3M0 11.0h3.5M0 14.0h3.5M0 17.0h3M0 21.0h3.5M0 24.5h2.5M0 29.0h3.5M0 33.5h3M0 37.0h2.5M0 40.5h3.5M0 45.0h3.5M0 48.0h3.5M0 51.0h2.5M0 54.0h3M0 57.0h3M0 61.5h3.5M0 66.0h3.5M0 70.5h3M0 75.0h2.5M0 79.0h2.5M0 82.0h2.5M0 86.5h2.5M0 90.5h3.5M0 95.0h3.5M0 99.0h3M0 103.5h3.5M0 107.5h3.5M0 112.0h3.5M0 115.5h3M0 118.5h3M0 122.0h3.5M0 126.0h3.5M0 129.0h3.5M0 132.5h3.5M0 136.5h3M0 139.5h2.5M0 144.0h3.5M0 148.5h2.5M0 152.5h2.5M0 157.0h2.5M0 160.0h3M0 164.5h3M0 167.5h2.5M0 170.5h3M0 174.5h3.5M0 178.5h3.5M0 182.0h2.5M0 186.0h2.5M0 189.0h2.5M0 192.0h2.5M0 196.5h3M0 200.5h2.5M0 203.5h3M0 207.5h3M0 211.0h3M0 215.5h3M0 220.0h3.5M0 223.0h3.5M0 227.0h3M0 230.5h3M0 235.0h3M0 239.0h3.5M0 243.0h2.5M0 247.5h3.5M0 251.5h2.5M0 256.0h3.5M0 259.5h2.5M0 263.5h3M0 267.5h3.5M0 271.5h3.5M0 275.5h3.5M0 280.0h2.5M0 283.0h3.5M0 286.0h3M0 290.0h3.5M0 294.5h3M0 298.5h2.5" stroke="#a4a6ac" stroke-width="1"/></svg>
<div class="a" style="left:593px;top:231px;width:8px;height:301px;background:#eef0f3"></div>
<div class="a" style="left:594px;top:266px;width:6px;height:67px;background:#d2d4d8;border-radius:1px"></div>
<svg style="left:595px;top:236px" width="5" height="3"><path d="M0 3L2.5 0 5 3z" fill="#888"/></svg>
<svg style="left:595px;top:488px" width="5" height="44" fill="none" stroke="#999" stroke-width="0.8"><path d="M0 0l2.5 2.5L5 0M0 10l2.5-2.5L5 10M0 13l2.5 -2.5L5 13"/><circle cx="2.5" cy="21" r="2"/><path d="M0 29l2.5 2.5L5 29M0 32l2.5 2.5L5 32"/></svg>
<div class="a" style="left:0;top:532px;width:601px;height:8px;background:#eef0f3"></div>
<div class="a" style="left:60px;top:533px;width:446px;height:6px;background:#dcdee2;border-radius:3px"></div>
<svg style="left:586px;top:534px" width="3" height="5"><path d="M0 0l3 2.5L0 5z" fill="#888"/></svg>
<!-- pin -->
<div class="a" style="left:570px;top:232px;width:22px;height:18px;background:#fff;border-left:1.5px solid #4a90e2;box-shadow:0 0 2px #ddd"></div>
<svg style="left:577px;top:236px" width="8" height="10"><path d="M4 9.5C1.5 6.5 0.5 5 0.5 3.5a3.5 3.5 0 0 1 7 0C7.5 5 6.5 6.5 4 9.5z" fill="#3a7fe0"/><circle cx="4" cy="3.6" r="1.3" fill="#fff"/></svg>
<!-- title & text -->
<div class="t" style="left:230px;top:237px;font-size:16px;font-weight:bold;color:#222;letter-spacing:0.75px">李二倩的考研经验分享</div>
<div class="dl" style="top:266px"><span style="color:#c0323a">前提：</span>由于我是专科学历，去年七月底辞职，八月三号开始复习，会计跨考农村</div>
<div class="a" style="left:562px;top:264px;width:1px;height:16px;background:#111"></div>
<div class="dl" style="top:285px;letter-spacing:-0.08px">发展，总分 381，政治 79；英语 59，专业课一（综合）122，专业课二（121），</div>
<div class="dl" style="top:304px">总共三本专业课，由于已经八月，时间紧迫，所有科目我每天都会去学习；以下</div>
<div class="dl" style="top:322px;text-align-last:left;text-align:left">就是我四个月多月的复习的规划；</div>
<div class="dl" style="top:341px;text-align-last:left;text-align:left">一、<span style="color:#c0323a">政治</span>：</div>
<div class="dl" style="top:359px;left:94px;width:468px">徐涛强化班＋肖秀荣精讲精练（或者徐涛课程自带的书也可以），由于政治</div>
<div class="dl" style="top:378px">基础实在太差，鸦片战争什么时候都不知道，所以我听了两遍强化班，有些及个</div>
<div class="dl" style="top:397px">别课程听了三遍，刷题用的小程序，1000 题刷了差不多两遍（也买了纸质版的</div>
<div class="dl" style="top:415px">一千题，前期刷，后期用小程序），肖四肖八，腿四，徐涛六套卷，我基本都在</div>
<div class="dl" style="top:434px;letter-spacing:-0.2px">小程序二刷三刷了；政治选择题很重要，大题强烈推荐张修齐，简直不要太好用，</div>
<div class="dl" style="top:453px">一个背肖四背哭的人，看到张修齐十页纸简直救命，大题都不用看材料，直接看</div>
<div class="dl" style="top:471px;text-align-last:left;text-align:left">一眼题目就可以写出来；</div>
<div class="dl" style="top:490px;text-align-last:left;text-align:left;color:#c0323a">二、英语：</div>
<div class="dl" style="top:509px;left:94px;width:468px">单词最重要，八月三号开始，每天六点半起，用默默背单词刷 500 个单词，</div>
<div class="a" style="left:8px;top:520px;width:585px;height:12px;overflow:hidden"><div class="dl" style="top:6px;left:57px">偶尔在休起来很累，当个在刷一遍，晚上睡前必须再过一遍早上的那 500 个单词</div></div>

<!-- style panel -->
<div class="a" style="left:601px;top:216px;width:191px;height:324px;background:#f4f5f7;border-left:1px solid #e6e7ea"></div>
<div class="a" style="left:765px;top:216px;width:1px;height:324px;background:#e8e9ec"></div>
<div class="t" style="left:608px;top:222px;font-size:7.6px;color:#555">样式和格式</div>
<svg style="left:647px;top:226px" width="4" height="3"><path d="M0 0h4L2 2.5z" fill="#777"/></svg>
<svg style="left:736px;top:221px" width="10" height="11"><path d="M3 0.5h4l-.5 4 2.5 2.5H1L3.5 4.5zM5 7v3.5" fill="none" stroke="#777" stroke-width="0.9"/></svg>
<svg style="left:752px;top:222px" width="8" height="8"><path d="M0.5 0.5l7 7M7.5 0.5l-7 7" stroke="#666" stroke-width="1"/></svg>
<div class="a" style="left:608px;top:239px;width:151px;height:18px;background:#fff"></div>
<div class="t" style="left:612px;top:244px;font-size:7.5px;color:#666">正文</div>
<svg style="left:750px;top:247px" width="4" height="3"><path d="M0 0h4L2 2.5z" fill="#777"/></svg>
<div class="a" style="left:608px;top:262px;width:35px;height:13px;background:#fff"></div>
<div class="t" style="left:611px;top:264px;font-size:7.6px;color:#666">新样式...</div>
<div class="a" style="left:649px;top:262px;width:38px;height:13px;background:#fff"></div>
<div class="t" style="left:652px;top:264px;font-size:7.75px;color:#666">清除格式</div>
<div class="t" style="left:608px;top:285px;font-size:8.6px;color:#666">请选择要应用的格式</div>
<div class="a" style="left:608px;top:299px;width:151px;height:200px;background:#fff"></div>
<div class="t" style="left:612px;top:305px;font-size:12.5px;font-weight:bold;color:#222">标题&nbsp; 1</div>
<div class="a" style="left:609px;top:321px;width:142px;height:20px;border:1px solid #c9cbd0;background:#fff"></div>
<div class="a" style="left:738px;top:322px;width:12px;height:18px;background:#e8e9ec"></div>
<svg style="left:742px;top:330px" width="4" height="3"><path d="M0 0h4L2 2.5z" fill="#999"/></svg>
<div class="t" style="left:612px;top:326px;font-size:12.5px;font-weight:bold;color:#111">标题&nbsp; 2</div>
<div class="t" style="left:612px;top:348px;font-size:12px;font-weight:bold;color:#222">标题&nbsp; 3</div>
<div class="t" style="left:612px;top:369.5px;font-size:11px;font-weight:bold;color:#222">标题&nbsp; 4</div>
<div class="t" style="left:611px;top:391px;font-size:8.3px;color:#666">默认段落字体</div>
<div class="a" style="left:609px;top:406px;width:141px;height:20px;border:1px solid #8bb8e8;background:#fff"></div>
<div class="t" style="left:612px;top:412px;font-size:8px;color:#555">正文</div>
<svg style="left:739px;top:307px" width="8" height="120" fill="none" stroke="#444" stroke-width="0.9"><path d="M6 0v4H1M2.5 2.5L1 4l1.5 1.5"/><path d="M6 42v4H1M2.5 44.5L1 46l1.5 1.5"/><path d="M6 63v4H1M2.5 65.5L1 67l1.5 1.5"/><path d="M2 86h4M2 88h4M3 85l1-2 1 2" stroke-width="0.7"/><path d="M6 104v4H1M2.5 106.5L1 108l1.5 1.5"/></svg>
<div class="t" style="left:607px;top:505px;font-size:7.5px;color:#555">显示:</div>
<div class="a" style="left:628px;top:502px;width:131px;height:13px;background:#fff"></div>
<div class="t" style="left:630px;top:505px;font-size:7.5px;color:#444">有效样式</div>
<svg style="left:752px;top:508px" width="4" height="3"><path d="M0 0h4L2 2.5z" fill="#777"/></svg>
<svg style="left:607px;top:519px" width="9" height="9"><rect x="0.5" y="0.5" width="8" height="8" fill="#fff" stroke="#777" stroke-width="0.8"/><path d="M2 4.5l2 2 3.5-4" fill="none" stroke="#444" stroke-width="0.9"/></svg>
<div class="t" style="left:619px;top:520px;font-size:7.3px;color:#444">显示预览</div>
<!-- right sidebar icons -->
<div class="a" style="left:773px;top:226px;width:13px;height:1px;background:#ccc"></div>
<div class="a" style="left:773px;top:228px;width:13px;height:1px;background:#ccc"></div>
<svg style="left:774px;top:238px" width="11" height="11" fill="none" stroke="#666" stroke-width="0.9"><path d="M1 10l2-4 5-5c1 0 2 1 2 2l-5 5zM3 6l2 2M6 3l2 2"/></svg>
<div class="a" style="left:768px;top:257px;width:20px;height:20px;background:#e2e3e6"></div>
<svg style="left:772px;top:260px" width="12" height="12" fill="none" stroke="#555" stroke-width="1"><path d="M1 11L10 3M1 11h10M3 9l6-6 2 2"/></svg>
<svg style="left:775px;top:283px" width="9" height="11" fill="#fff" stroke="#555" stroke-width="0.9"><path d="M0.5 0.5v9l2.5-2 1.5 3 1.5-.7-1.5-3h3.5z"/></svg>
<svg style="left:774px;top:305px" width="11" height="10" fill="none" stroke="#555" stroke-width="0.9"><path d="M0 2h11M0 7.5h11"/><circle cx="7" cy="2" r="1.5" fill="#fff"/><circle cx="4" cy="7.5" r="1.5" fill="#fff"/></svg>
<svg style="left:774px;top:327px" width="11" height="11" fill="none" stroke="#555" stroke-width="0.9"><circle cx="5.5" cy="5.5" r="5"/><path d="M3.8 4a1.7 1.7 0 1 1 2.5 1.5c-.7.4-.8.8-.8 1.5M5.5 8.3v.8"/></svg>
<svg style="left:774px;top:349px" width="11" height="11" fill="none" stroke="#555" stroke-width="0.9"><path d="M5.5 0.5l5 5-5 5-5-5z"/><circle cx="5.5" cy="5.5" r="1.7"/></svg>
<svg style="left:774px;top:372px" width="11" height="11" fill="none" stroke="#555" stroke-width="0.9"><path d="M0.5 1.5h4l1 1h5v7h-10z M5.5 2.5v7"/></svg>
<svg style="left:774px;top:394px" width="11" height="11" fill="none" stroke="#555" stroke-width="0.9"><rect x="0.5" y="0.5" width="10" height="10" rx="1.5"/><circle cx="7" cy="7" r="2"/><path d="M2 8l2-3 2 2"/></svg>
<svg style="left:773px;top:528px" width="14" height="3"><circle cx="2" cy="1.5" r="1.3" fill="#666"/><circle cx="7" cy="1.5" r="1.3" fill="#666"/><circle cx="12" cy="1.5" r="1.3" fill="#666"/></svg>
<!-- green badge -->
<div class="a" style="left:770px;top:240px;width:22px;height:40px;overflow:hidden"><div class="a" style="left:11px;top:7px;width:27px;height:27px;border-radius:14px;background:radial-gradient(circle at 40% 40%,#52da5e,#22a936);border:1px solid #e6f5e6"></div><div class="t" style="left:14px;top:17px;font-size:7px;color:#fff">62</div></div>

<!-- status bar -->
<div class="a" style="left:0;top:540px;width:792px;height:17px;background:#f3f4f6"></div>
<div class="t" style="left:0;top:546px;font-size:8px;color:#555">页码: 1</div>
<div class="t" style="left:30px;top:546px;font-size:8px;color:#555">页面: 1/1</div>
<div class="t" style="left:71px;top:546px;font-size:8px;color:#555">节: 1/1</div>
<div class="t" style="left:104px;top:546px;font-size:8px;color:#555">行: 2</div>
<div class="t" style="left:126px;top:546px;font-size:8px;color:#555">列: 36</div>
<div class="t" style="left:159px;top:546px;font-size:8px;color:#555">字数: 1034</div>
<svg style="left:202px;top:544px" width="9" height="9"><rect x="0.5" y="0.5" width="8" height="8" rx="1" fill="none" stroke="#555" stroke-width="0.8"/><path d="M2 4.5l2 2 3-4" fill="none" stroke="#555" stroke-width="0.8"/></svg>
<div class="t" style="left:213px;top:546px;font-size:8px;color:#555">拼写检查</div>
<svg style="left:247px;top:548px" width="3" height="2"><path d="M0 0h3L1.5 2z" fill="#888"/></svg>
<svg style="left:258px;top:544px" width="9" height="9"><rect x="0.5" y="0.5" width="8" height="8" rx="1" fill="none" stroke="#555" stroke-width="0.8"/><path d="M2.5 2.5l4 4M6.5 2.5l-4 4" stroke="#555" stroke-width="0.8"/></svg>
<div class="t" style="left:270px;top:546px;font-size:8px;color:#555">文档校对</div>
<div class="a" style="left:487px;top:541px;width:17px;height:15px;background:#e2e4e8"></div>
<svg style="left:489px;top:545px" width="13" height="8" fill="none" stroke="#555" stroke-width="0.9"><path d="M0.5 4c3-4.5 9-4.5 12 0-3 4.5-9 4.5-12 0z"/><circle cx="6.5" cy="4" r="1.8"/><path d="M1 0.5l1.5 1.5M12 0.5l-1.5 1.5M6.5 0v1"/></svg>
<div class="a" style="left:512px;top:541px;width:15px;height:15px;background:#e2e4e8"></div>
<svg style="left:514px;top:543px" width="12" height="12" fill="none" stroke="#555" stroke-width="0.9"><path d="M1.5 0.5h6l2.5 2.5v8.5h-8.5z M3.5 5h5M3.5 7h5M3.5 9h5"/></svg>
<svg style="left:532px;top:544px" width="10" height="10" fill="none" stroke="#555" stroke-width="0.9"><path d="M0 1h10M2 3.5h8M2 6h8M0 8.5h10"/></svg>
<svg style="left:546px;top:543px" width="11" height="11" fill="none" stroke="#555" stroke-width="0.9"><path d="M0.5 1.5h4.5l.5 1 .5-1h4.5v8h-4.5l-.5 1-.5-1H.5z M5.5 2.5v7"/></svg>
<svg style="left:560px;top:543px" width="11" height="11" fill="none" stroke="#555" stroke-width="0.9"><circle cx="5.5" cy="5.5" r="5"/><path d="M0.5 5.5h10M5.5 0.5c-3 3-3 7 0 10M5.5 0.5c3 3 3 7 0 10"/></svg>
<svg style="left:578px;top:543px" width="11" height="11" fill="none" stroke="#555" stroke-width="0.9"><path d="M0.5 10.5l1-3.5 6.5-6.5 2.5 2.5-6.5 6.5zM0.5 10.5h10"/></svg>
<svg style="left:603px;top:543px" width="11" height="11" fill="none" stroke="#555" stroke-width="0.9"><path d="M0.5 3V0.5H3M8 0.5h2.5V3M10.5 8v2.5H8M3 10.5H0.5V8"/><rect x="3" y="3" width="5" height="5"/></svg>
<div class="t" style="left:618px;top:546px;font-size:8.5px;color:#555">144%</div>
<svg style="left:642px;top:548px" width="3" height="2"><path d="M0 0h3L1.5 2z" fill="#888"/></svg>
<div class="a" style="left:653px;top:548.5px;width:6px;height:1.3px;background:#444"></div>
<div class="a" style="left:665px;top:548.5px;width:88px;height:1px;background:#bbb"></div>
<div class="a" style="left:707px;top:544px;width:10px;height:10px;border-radius:5px;background:#fff;border:1px solid #555"></div>
<svg style="left:758px;top:545px" width="8" height="8"><path d="M4 0v8M0 4h8" stroke="#444" stroke-width="1.2"/></svg>
<svg style="left:773px;top:543px" width="10" height="11" fill="none" stroke="#555" stroke-width="0.9"><path d="M0.5 3.5v-3h3M0.5 0.5l3 3M9.5 3.5v-3h-3M9.5 0.5l-3 3M0.5 7.5v3h3M0.5 10.5l3-3M9.5 7.5v3h-3M9.5 10.5l-3-3"/></svg>

<!-- taskbar -->
<div class="a" style="left:0;top:559px;width:792px;height:24px;background:#ebe3e0"></div>
<svg style="left:3px;top:564px" width="10" height="10"><path d="M0 1.5l4-.6v4H0zM5 .8L10 0v5H5zM0 5.5h4v4L0 9zM5 5.5h5V10l-5-.7z" fill="#111"/></svg>
<svg style="left:32px;top:564px" width="11" height="11" fill="none" stroke="#555" stroke-width="1"><circle cx="6.5" cy="4.5" r="3.5"/><path d="M4 7l-3.5 3.5"/></svg>
<svg style="left:60px;top:562px" width="14" height="14"><circle cx="4" cy="4" r="3.5" fill="#111"/><circle cx="10" cy="4" r="3.5" fill="#111"/><circle cx="7" cy="9" r="3.5" fill="#111"/></svg>
<svg style="left:89px;top:565px" width="10" height="10"><circle cx="5" cy="5" r="4.5" fill="none" stroke="#2f7fd3" stroke-width="1.6"/><path d="M1 5h8" stroke="#2f7fd3" stroke-width="1.3"/></svg>
<div class="t" style="left:107px;top:566px;font-size:7px;color:#333;letter-spacing:-0.3px">清静寄疫苗防范呆烦</div>
<div class="a" style="left:169px;top:562px;width:31px;height:18px;background:#3a95ee"></div>
<div class="t" style="left:171px;top:567px;font-size:7.5px;color:#fff">搜索一下</div>
<svg style="left:207px;top:564px" width="13" height="12"><path d="M0 1.5h5l1 1.5h7v9H0z" fill="#f6c042"/><path d="M0 4h13v8H0z" fill="#fbd25a"/><rect x="3.5" y="7" width="6" height="3" fill="#2b7cd3"/></svg>
<svg style="left:233px;top:562px" width="14" height="15"><path d="M11.5 9.5A5 5 0 1 1 11.8 6.5H3" fill="none" stroke="#52b82f" stroke-width="2.4"/><path d="M1 4C3-.5 12-1 13.5 2.5" fill="none" stroke="#7ccc3a" stroke-width="1.1"/><path d="M1 13c2 1.5 5 1 7-.5" fill="none" stroke="#7ccc3a" stroke-width="1"/></svg>
<svg style="left:258px;top:562px" width="15" height="15"><circle cx="7.5" cy="7.5" r="7" fill="#1f8ad8"/><path d="M3 9c0-4 6-5.5 8-2.5-2-.5-4 0-4 2s3 3 6 1.5c-2 4-10 4-10-1z" fill="#5fd36b"/><circle cx="8.5" cy="8.5" r="2" fill="#1f8ad8"/></svg>
<svg style="left:284px;top:563px" width="13" height="13"><g transform="translate(6.5 6.5)"><path d="M-1.2-6.2h2.4l.4 1.8 1.2.5 1.5-1 1.7 1.7-1 1.5.5 1.2 1.8.4v2.4l-1.8.4-.5 1.2 1 1.5-1.7 1.7-1.5-1-1.2.5-.4 1.8h-2.4l-.4-1.8-1.2-.5-1.5 1-1.7-1.7 1-1.5-.5-1.2-1.8-.4v-2.4l1.8-.4.5-1.2-1-1.5 1.7-1.7 1.5 1 1.2-.5z" fill="#222"/><circle r="2.2" fill="#ebe3e0"/></g></svg>
<div class="t" style="left:300px;top:566px;font-size:8px;color:#222">设置</div>
<div class="a" style="left:282px;top:581px;width:43px;height:2px;background:#1a9ba8"></div>
<div class="a" style="left:332px;top:563px;width:12px;height:12px;background:#1c73f0;border-radius:2px"></div>
<svg style="left:333px;top:566px" width="10" height="6"><path d="M0.5 5.5l2.5-4.5 2 3 2-3 2.5 4.5" fill="none" stroke="#fff" stroke-width="1.3"/></svg>
<div class="t" style="left:348px;top:566px;font-size:8px;color:#222">腾讯...</div>
<div class="a" style="left:330px;top:581px;width:42px;height:2px;background:#1a9ba8"></div>
<div class="a" style="left:379px;top:563px;width:12px;height:12px;background:#1c73f0;border-radius:2px"></div>
<svg style="left:380px;top:566px" width="10" height="6"><path d="M0.5 5.5l2.5-4.5 2 3 2-3 2.5 4.5" fill="none" stroke="#fff" stroke-width="1.3"/></svg>
<div class="t" style="left:395px;top:566px;font-size:8px;color:#222">聊天</div>
<div class="a" style="left:377px;top:581px;width:42px;height:2px;background:#1a9ba8"></div>
<svg style="left:425px;top:563px" width="13" height="12"><ellipse cx="5.5" cy="5" rx="5.5" ry="4.5" fill="#2dc14e"/><path d="M2 8l-1 3 3-2z" fill="#2dc14e"/><circle cx="11" cy="8" r="1" fill="#2dc14e"/></svg>
<div class="t" style="left:443px;top:566px;font-size:8px;color:#222">微信</div>
<div class="a" style="left:425px;top:581px;width:42px;height:2px;background:#1a9ba8"></div>
<div class="a" style="left:470px;top:559px;width:47px;height:22px;background:#f4eeec"></div>
<svg style="left:474px;top:563px" width="14" height="12"><path d="M0 0h3.5l2 7 1.5-5h1l1.5 5 2-7H14l-3.5 12h-2L7 7l-1.5 5h-2z" fill="#e8332a"/></svg>
<div class="t" style="left:490px;top:566px;font-size:8px;color:#222">考研...</div>
<div class="a" style="left:470px;top:581px;width:47px;height:2px;background:#1a9ba8"></div>
<svg style="left:518px;top:562px" width="15" height="15"><path d="M9 0.5A7 7 0 1 0 14.5 9 6 6 0 0 1 9 0.5z" fill="#f5a623"/></svg>
<div class="t" style="left:538px;top:566px;font-size:9px;color:#222">18°C</div>
<svg style="left:569px;top:567px" width="7" height="5"><path d="M0.5 4.5l3-3.5 3 3.5" fill="none" stroke="#333" stroke-width="0.9"/></svg>
<svg style="left:582px;top:565px" width="9" height="9" fill="none" stroke="#333" stroke-width="0.9"><path d="M0.5 3h2l3-2.5v8l-3-2.5h-2z" fill="#fff"/><path d="M7 2.5c1 1 1 3 0 4M8.3 1.5c1.5 1.5 1.5 4.5 0 6"/></svg>
<svg style="left:595px;top:565px" width="11" height="8"><path d="M0 3l3-3h1l-2 3z" fill="#222"/><rect x="1" y="3" width="10" height="5" fill="#222"/></svg>
<svg style="left:613px;top:564px" width="9" height="9"><circle cx="4.5" cy="4.5" r="4.5" fill="#f2d61c"/><circle cx="4.5" cy="4.5" r="3.2" fill="#2aa54a"/><path d="M4.5 2.5v4M2.5 4.5h4" stroke="#fff" stroke-width="1.1"/></svg>
<svg style="left:627px;top:564px" width="9" height="10" fill="none" stroke="#666" stroke-width="0.9"><path d="M3 0.5v6a1.5 1.5 0 0 0 3 0v-6M1 3.5v3a3.5 3.5 0 0 0 7 0v-3M4.5 9.5V10"/></svg>
<svg style="left:645px;top:563px" width="11" height="11"><path d="M1 1.5l9-1 .5 9.5-9 1z" fill="#f05a22"/><path d="M7.5 3.5c-1-.7-3-.6-3.3.4s.5 1.4 1.5 1.6 1.6.6 1.3 1.4-2.2.8-3.3.2" fill="none" stroke="#fff" stroke-width="1.2"/></svg>
<div class="t" style="left:663px;top:563px;font-size:8.5px;color:#222">19:57 周六</div>
<div class="t" style="left:662px;top:574px;font-size:8.5px;color:#222">2022/10/15</div>
<svg style="left:715px;top:563px" width="17" height="14"><path d="M0.5 0.5h16v10h-6.5l-1.5 2.5-1.5-2.5H.5z" fill="#fff" stroke="#333" stroke-width="0.9"/><path d="M4 4h9M4 6.5h9" stroke="#333" stroke-width="0.9"/></svg>
<svg style="left:740px;top:564px" width="16" height="15"><rect x="0" y="0" width="10" height="8" fill="#111"/><path d="M3 2l4 2-4 2z" fill="#fff"/><rect x="7" y="6" width="8" height="8" fill="#e31414"/><text x="9" y="13" font-size="7" fill="#fff" font-family="Liberation Sans">2</text></svg>
<svg style="left:766px;top:564px" width="17" height="16"><path d="M0 0h10v7H5L3 9V7H0z" fill="#111"/><path d="M2 2h6M2 4.2h6" stroke="#999" stroke-width="0.8"/><circle cx="10.5" cy="10" r="5" fill="#e8e0dc" stroke="#aaa" stroke-width="0.9"/><text x="8.5" y="13" font-size="7.5" fill="#111" font-family="Liberation Sans">1</text></svg>
<!-- 说点什么 overlay -->
<div class="a" style="left:3px;top:562px;width:115px;height:25px;background:rgba(44,46,50,0.82);border-radius:3px"></div>
<svg style="left:10px;top:568px" width="14" height="14"><circle cx="7" cy="7" r="6.5" fill="#fff"/><circle cx="4.7" cy="5.3" r="0.9" fill="#444"/><circle cx="9.3" cy="5.3" r="0.9" fill="#444"/><path d="M3.5 7.8h7a3.5 3.5 0 0 1-7 0z" fill="#444"/></svg>
<div class="a" style="left:30px;top:566px;width:1px;height:18px;background:rgba(255,255,255,0.2)"></div>
<div class="t" style="left:41px;top:570px;font-size:10px;color:#ddd">说点什么...</div>
<div class="a" style="left:96px;top:566px;width:1px;height:18px;background:rgba(255,255,255,0.2)"></div>
<svg style="left:105px;top:570px" width="6" height="10"><path d="M5 0.5L1 5l4 4.5" fill="none" stroke="#eee" stroke-width="1.4"/></svg>

<!--WPS5-->

<!-- video tiles -->
<div class="a" style="left:798.5px;top:69px;width:162.5px;height:91px;background:#232427;border:1.5px solid #1fae55;border-radius:3px"></div>
<div class="a" style="left:852px;top:58px;width:61px;height:21px;background:rgba(0,0,0,0.2)"></div>
<svg style="left:876px;top:64px" width="12" height="6"><path d="M0.5 5.5l5.5-5 5.5 5" fill="none" stroke="#bbb" stroke-width="1"/></svg>
<svg style="left:858px;top:87px" width="43" height="43"><defs><clipPath id="c1"><circle cx="21.5" cy="21.5" r="21.5"/></clipPath><filter id="bl"><feGaussianBlur stdDeviation="0.8"/></filter></defs><g clip-path="url(#c1)"><g filter="url(#bl)"><rect width="43" height="43" fill="#2a2e28"/><rect y="0" width="43" height="18" fill="#1f2a1f"/><path d="M0 22h43v21H0z" fill="#9a8b7c"/><path d="M0 24c8 0 10 2 12 4v15H0zM43 20c-6 0-8 3-10 6v17h10z" fill="#b4a494"/><path d="M7 43c0-12 5-19 12-20h6c7 1 12 8 12 20z" fill="#0d0e12"/><path d="M16 3l10-1 3 16-9 4z" fill="#2f5f9e"/><path d="M24 5l9 2-5 17-5-2z" fill="#3c7bc6"/><path d="M17 15c2 0 4 5 4 10l-3 3zM27 15c-1 3-3 7-4 12l3 1z" fill="#cfa587"/></g></g></svg>
<div class="a" style="left:800px;top:142px;width:107px;height:16px;background:#18191b"></div>
<svg style="left:802px;top:144px" width="13" height="12"><rect x="0" y="0" width="12" height="8.5" rx="1" fill="#fff"/><path d="M4 6c.5-2 2-3 4-3M6.5 1.8L8.3 3 6.8 4.6" fill="none" stroke="#222" stroke-width="1"/><rect x="3" y="10" width="6" height="1.5" fill="#fff"/></svg>
<svg style="left:818px;top:143px" width="12" height="14"><rect x="3.5" y="0.5" width="5" height="8" rx="2.5" fill="#3ee065"/><path d="M1.2 6a4.8 4.8 0 0 0 9.6 0M6 11v2.5" fill="none" stroke="#fff" stroke-width="1.3"/></svg>
<div class="t" style="left:834px;top:146px;font-size:8.8px;color:#eee">李倩倩的屏幕共享</div>

<div class="a" style="left:800.5px;top:167px;width:160px;height:90px;background:#232427;border:1px solid #3a3b3e;border-radius:3px"></div>
<div class="a" style="left:858px;top:184px;width:43px;height:43px;border-radius:50%;background:radial-gradient(circle at 50% 60%,#0f3a6a 0%,#071a33 45%,#020408 75%)"></div>
<svg style="left:862px;top:189px" width="36" height="34"><path d="M4 5c2-3 5-2 7 2l7 17M32 5c-2-3-5-2-7 2l-7 17" fill="none" stroke="#27d3f0" stroke-width="3" stroke-linecap="round"/><text x="6" y="32" font-size="9" font-weight="bold" fill="#27c8f0" font-family="Liberation Sans">Aries</text></svg>
<div class="a" style="left:801px;top:239px;width:100px;height:16px;background:#18191b"></div>
<svg style="left:805px;top:241px" width="11" height="12"><rect x="3" y="0" width="5" height="7.5" rx="2.5" fill="#eee"/><path d="M1 5.5a4.5 4.5 0 0 0 9 0M5.5 10v2" fill="none" stroke="#eee" stroke-width="1.2"/><path d="M0.5 11.5L10.5 1" stroke="#e04a3d" stroke-width="1.3"/></svg>
<div class="t" style="left:820px;top:243px;font-size:8.8px;color:#eee">工程管理1班 张立农</div>

<div class="a" style="left:800.5px;top:265px;width:160px;height:90px;background:#232427;border:1px solid #3a3b3e;border-radius:3px"></div>
<svg style="left:858px;top:282px" width="43" height="43"><defs><clipPath id="c3"><circle cx="21.5" cy="21.5" r="21.5"/></clipPath></defs><g clip-path="url(#c3)" filter="url(#bl)"><rect width="43" height="43" fill="#8fae7a"/><path d="M0 0h43v9H0z" fill="#b7ad9c"/><path d="M0 8h43v8H0z" fill="#9fb88a"/><path d="M0 10c4 2 6 6 7 22H0z" fill="#6fb050"/><path d="M30 12h13v12H30z" fill="#7eaa66"/><path d="M6 22h37v10H6z" fill="#9c958a"/><path d="M30 24l13 2v17H26z" fill="#c7c3ba"/><path d="M0 32c10 0 20 3 24 11H0z" fill="#dedbd3"/><rect x="15" y="11" width="6" height="9" rx="2" fill="#eef0f4"/><rect x="19.5" y="10" width="5" height="13" fill="#2e3856"/><rect x="19.5" y="22" width="4" height="18" fill="#1f2a36"/><circle cx="22" cy="8.5" r="2.3" fill="#1a1a1a"/><rect x="20" y="16" width="9" height="8" rx="1.5" fill="#e0202a"/><circle cx="14" cy="1.5" r="1.4" fill="#d33a3a"/><circle cx="24" cy="1.5" r="1.4" fill="#d33a3a"/></g></svg>
<div class="a" style="left:801px;top:337px;width:16px;height:17px;background:#f28418"></div>
<svg style="left:803px;top:340px" width="12" height="11"><circle cx="6" cy="3" r="2.7" fill="#fff"/><path d="M0.5 11c.5-3.5 2.5-5 5.5-5s5 1.5 5.5 5z" fill="#fff"/></svg>
<div class="a" style="left:817px;top:337px;width:48px;height:17px;background:#18191b"></div>
<svg style="left:821px;top:339px" width="11" height="12"><rect x="3" y="0" width="5" height="7.5" rx="2.5" fill="#eee"/><path d="M1 5.5a4.5 4.5 0 0 0 9 0M5.5 10v2" fill="none" stroke="#eee" stroke-width="1.2"/><path d="M0.5 11.5L10.5 1" stroke="#e04a3d" stroke-width="1.3"/></svg>
<div class="t" style="left:837px;top:341px;font-size:8.8px;color:#eee">廖SIR</div>

<div class="a" style="left:800.5px;top:362px;width:160px;height:90px;background:#232427;border:1px solid #3a3b3e;border-radius:3px"></div>
<svg style="left:858px;top:379px" width="43" height="43"><defs><clipPath id="c4"><circle cx="21.5" cy="21.5" r="21.5"/></clipPath></defs><g clip-path="url(#c4)" filter="url(#bl)"><rect width="43" height="43" fill="#3f6a35"/><path d="M0 0h20v43H0z" fill="#365c2e"/><path d="M0 26h12v17H0z" fill="#5a4a36"/><path d="M18 1c9-2 17 3 19 11l4 20-10 4-11-10z" fill="#dccaa8"/><path d="M19 5c5 0 8 6 7 13l-5 5-5-7z" fill="#ecc3ad"/><path d="M17 40c2-7 7-11 15-11 6 0 10 4 12 11v3H17z" fill="#edc7ae"/><path d="M29 30l6-3 2 6-6 8z" fill="#a9d0b4"/><path d="M12 19c3-2 8-2 12 0l2 20-9 1z" fill="#b0c995"/><path d="M16 38h6l1 5h-8z" fill="#efcbb3"/><path d="M14 17c3-2 7-2 10 1" stroke="#e88f8f" stroke-width="2" fill="none"/></g></svg>
<div class="a" style="left:801px;top:435px;width:52px;height:17px;background:#18191b"></div>
<svg style="left:805px;top:437px" width="11" height="12"><rect x="3" y="0" width="5" height="7.5" rx="2.5" fill="#eee"/><path d="M1 5.5a4.5 4.5 0 0 0 9 0M5.5 10v2" fill="none" stroke="#eee" stroke-width="1.2"/><path d="M0.5 11.5L10.5 1" stroke="#e04a3d" stroke-width="1.3"/></svg>
<div class="t" style="left:820px;top:439px;font-size:8.8px;color:#eee">杜龙飘</div>

<div class="a" style="left:800.5px;top:460px;width:160px;height:90px;background:#232427;border:1px solid #3a3b3e;border-radius:3px"></div>
<svg style="left:858px;top:476px" width="43" height="43"><defs><clipPath id="c5"><circle cx="21.5" cy="21.5" r="21.5"/></clipPath></defs><g clip-path="url(#c5)" filter="url(#bl)"><rect width="43" height="43" fill="#d2cfcb"/><path d="M30 0h13v43H32z" fill="#e2e0dc"/><path d="M2 43c1-9 4-15 10-18l10 4 10-4c6 3 9 9 10 18z" fill="#2b2624"/><rect x="20" y="35" width="6" height="8" fill="#b3c2cc"/><path d="M12 11h19c0 14-3 24-9 24s-10-10-10-24z" fill="#caa17f"/><path d="M10 18c-1-9 5-13 11-13 7 0 12 4 11 13-1-3-4-4-10-4s-9 1-12 4z" fill="#201b19"/><path d="M15 23h4M24 23h4" stroke="#4a3528" stroke-width="1.2"/></g></svg>
<div class="a" style="left:801px;top:532px;width:52px;height:17px;background:#18191b"></div>
<svg style="left:805px;top:534px" width="11" height="12"><rect x="3" y="0" width="5" height="7.5" rx="2.5" fill="#eee"/><path d="M1 5.5a4.5 4.5 0 0 0 9 0M5.5 10v2" fill="none" stroke="#eee" stroke-width="1.2"/><path d="M0.5 11.5L10.5 1" stroke="#e04a3d" stroke-width="1.3"/></svg>
<div class="t" style="left:820px;top:536px;font-size:8.8px;color:#eee">路昕鹏</div>

<div class="a" style="left:800.5px;top:557px;width:160px;height:90px;background:#1a1b1d;border:1px solid #3a3b3e;border-radius:3px"></div>
<div class="a" style="left:802px;top:559px;width:157px;height:86px;background:linear-gradient(180deg,#1c7ade 0%,#2f8ae6 35%,#4f9fea 58%,#86bff0 72%,#cfe5f4 75%,#b9d5e4 77%,#c6dce8 100%)"></div>
<svg style="left:802px;top:559px" width="157" height="86"><defs><filter id="cb"><feGaussianBlur stdDeviation="1.5"/></filter></defs><g filter="url(#cb)" fill="#fff"><ellipse cx="115" cy="12" rx="30" ry="3" opacity="0.6" transform="rotate(-8 115 12)"/><ellipse cx="50" cy="17" rx="25" ry="1.8" opacity="0.4"/><ellipse cx="45" cy="45" rx="22" ry="3" opacity="0.55"/><ellipse cx="40" cy="62" rx="18" ry="3.5" opacity="0.8"/><ellipse cx="65" cy="61" rx="14" ry="4" opacity="0.85"/><ellipse cx="135" cy="57" rx="10" ry="3" opacity="0.8"/><ellipse cx="115" cy="62" rx="20" ry="2.5" opacity="0.7"/><ellipse cx="90" cy="50" rx="40" ry="6" opacity="0.25"/></g></svg>
<div class="a" style="left:853px;top:623px;width:60px;height:17px;background:rgba(60,62,66,0.85);border-radius:2px"></div>
<svg style="left:877px;top:628px" width="12" height="7"><path d="M0.5 0.5l5.5 5 5.5-5" fill="none" stroke="#eee" stroke-width="1.3"/></svg>
<div class="a" style="left:802px;top:629px;width:42px;height:16px;background:rgba(40,42,46,0.75)"></div>
<svg style="left:805px;top:631px" width="11" height="12"><rect x="3" y="0" width="5" height="7.5" rx="2.5" fill="#eee"/><path d="M1 5.5a4.5 4.5 0 0 0 9 0M5.5 10v2" fill="none" stroke="#eee" stroke-width="1.2"/><path d="M0.5 11.5L10.5 1" stroke="#e04a3d" stroke-width="1.3"/></svg>
<div class="t" style="left:820px;top:633px;font-size:8.8px;color:#eee">沙漠</div>

<!-- side handle on WPS right edge -->
<div class="a" style="left:778px;top:342px;width:15px;height:32px;background:rgba(95,97,101,0.92);border-radius:4px 0 0 4px"></div>
<svg style="left:782px;top:351px" width="6" height="13"><path d="M0.5 0.5l5 6-5 6" fill="none" stroke="#e6e6e6" stroke-width="1.1"/></svg>
<div class="a" style="left:794px;top:348px;width:1.2px;height:23px;background:#c8c8c8"></div>
<div class="a" style="left:797px;top:348px;width:1.2px;height:23px;background:#c8c8c8"></div>

<!-- ===== bottom toolbar ===== -->
<div class="a" style="left:0;top:650px;width:967px;height:41px;background:#fff"></div>
<div class="a" style="left:0;top:691px;width:1080px;height:6px;background:#d8dde5"></div>
<div class="a" style="left:160px;top:691px;width:40px;height:6px;background:#e8eaee"></div>

<!-- bottom toolbar icons -->
<svg style="left:12px;top:655px" width="18" height="21"><rect x="5.5" y="0" width="7" height="12" rx="3.5" fill="#45484d"/><path d="M2.5 8.5a6.5 6.5 0 0 0 13 0M9 15v3.5M4.5 19.5h9" fill="none" stroke="#45484d" stroke-width="1.6"/><path d="M1.5 18L16.5 2" stroke="#f2f2f2" stroke-width="3"/><path d="M1.5 18L16.5 2" stroke="#ea3a34" stroke-width="1.4"/></svg>
<div class="bl" style="left:2px;top:678px">解除静音</div>
<svg style="left:45px;top:668px" width="9" height="6"><path d="M0.5 5.5L4.5 1l4 4.5" fill="none" stroke="#333" stroke-width="1.3"/></svg>
<svg style="left:71px;top:657px" width="21" height="16"><rect x="0" y="0.5" width="14" height="14" rx="1.5" fill="#45484d"/><path d="M14.5 6l6-4v12l-6-4z" fill="#45484d"/><path d="M1 15.5L14.5 0" stroke="#fff" stroke-width="3"/><path d="M1 15.5L14.5 0" stroke="#ea3a34" stroke-width="1.4"/></svg>
<div class="bl" style="left:64px;top:678px">开启视频</div>
<svg style="left:106px;top:668px" width="9" height="6"><path d="M0.5 5.5L4.5 1l4 4.5" fill="none" stroke="#333" stroke-width="1.3"/></svg>

<svg style="left:282px;top:655px" width="21" height="19"><rect x="1" y="1" width="19" height="13" rx="1" fill="#3f4247" stroke="#19c15c" stroke-width="1.6"/><path d="M7 10c.5-3 2.5-4.5 5.5-4.5M10.5 3.5l2.5 2-2 2.3" fill="none" stroke="#fff" stroke-width="1.3"/><rect x="5.5" y="16.5" width="10" height="2" fill="#3f4247"/></svg>
<div class="bl" style="left:275px;top:678px">共享屏幕</div>
<svg style="left:316px;top:668px" width="9" height="6"><path d="M0.5 5.5L4.5 1l4 4.5" fill="none" stroke="#333" stroke-width="1.3"/></svg>
<svg style="left:343px;top:655px" width="20" height="19"><circle cx="8" cy="4.5" r="4" fill="#45484d"/><path d="M0 18c0-5 3-8 8-8 2.5 0 4 .7 5 1.5V18z" fill="#45484d"/><circle cx="15" cy="13.5" r="5" fill="#45484d" stroke="#fff" stroke-width="1.2"/><path d="M15 10.7v5.6M12.2 13.5h5.6" stroke="#fff" stroke-width="1.3"/></svg>
<div class="bl" style="left:343px;top:678px">邀请</div>
<svg style="left:393px;top:655px" width="22" height="19"><circle cx="11" cy="5" r="4.3" fill="#45484d"/><path d="M15 1.5a4.5 4.5 0 0 1 0 7" fill="none" stroke="#45484d" stroke-width="1"/><path d="M2 18.5c0-5.5 4-8 9-8s9 2.5 9 8z" fill="#45484d"/><path d="M17 11c2 1 3.5 3 3.5 7.5" fill="none" stroke="#45484d" stroke-width="1"/></svg>
<div class="bl" style="left:383px;top:678px">成员(99+)</div>
<div class="a" style="left:431px;top:653px;width:46px;height:36px;background:#e7e8eb;border-radius:3px"></div>
<svg style="left:446px;top:657px" width="17" height="16"><path d="M1.5 0h14a1.5 1.5 0 0 1 1.5 1.5v9a1.5 1.5 0 0 1-1.5 1.5H10L7 15.5V12H1.5A1.5 1.5 0 0 1 0 10.5v-9A1.5 1.5 0 0 1 1.5 0z" fill="#45484d"/><circle cx="4.5" cy="6" r="1.2" fill="#fff"/><circle cx="8.5" cy="6" r="1.2" fill="#fff"/><circle cx="12.5" cy="6" r="1.2" fill="#fff"/></svg>
<div class="bl" style="left:445px;top:678px">聊天</div>
<svg style="left:499px;top:655px" width="19" height="19"><circle cx="9.5" cy="9.5" r="8.7" fill="none" stroke="#45484d" stroke-width="1.5"/><circle cx="9.5" cy="9.5" r="6.5" fill="#45484d"/></svg>
<div class="bl" style="left:500px;top:678px">录制</div>
<svg style="left:557px;top:655px" width="15" height="19"><path d="M3 9V3.5a1.2 1.2 0 0 1 2.4 0V8V2a1.2 1.2 0 0 1 2.4 0v6V2.8a1.2 1.2 0 0 1 2.4 0V8V4.2a1.2 1.2 0 0 1 2.4 0V12c0 4-2.5 6.5-6 6.5-3 0-4.5-2-6-5L.5 9.5a1.2 1.2 0 0 1 2-1.3z" fill="#45484d"/></svg>
<div class="bl" style="left:555px;top:678px">举手</div>
<svg style="left:607px;top:655px" width="19" height="19"><rect x="0" y="1.5" width="8" height="8" rx="1.5" fill="#45484d"/><rect x="0" y="11" width="8" height="8" rx="1.5" fill="#45484d"/><rect x="9.5" y="11" width="8" height="8" rx="1.5" fill="#45484d"/><path d="M13.5 0.8l4.2 4.2-4.2 4.2-4.2-4.2z" fill="none" stroke="#45484d" stroke-width="1.2"/></svg>
<div class="bl" style="left:607px;top:678px">应用</div>
<svg style="left:657px;top:655px" width="19" height="19"><g transform="translate(9.5 9.5)"><path d="M-1.8-9h3.6l.5 2.6 1.8.8 2.2-1.5 2.5 2.5-1.5 2.2.8 1.8L9-1.8v3.6l-2.6.5-.8 1.8 1.5 2.2-2.5 2.5-2.2-1.5-1.8.8L1.8 9h-3.6l-.5-2.6-1.8-.8-2.2 1.5-2.5-2.5 1.5-2.2-.8-1.8L-9 1.8v-3.6l2.6-.5.8-1.8-1.5-2.2 2.5-2.5 2.2 1.5 1.8-.8z" fill="#45484d"/><circle r="3" fill="#fff"/></g></svg>
<div class="bl" style="left:657px;top:678px">设置</div>
<div class="a" style="left:893px;top:656px;width:64px;height:31px;border:1px solid #f7a3a3;border-radius:3px;background:#fff"></div>
<div class="t" style="left:902px;top:667px;font-size:10.8px;color:#ef5454">离开会议</div>

<!-- ===== chat panel ===== -->
<div class="a" style="left:967px;top:25px;width:113px;height:666px;background:#fff;border-left:1px solid #e3e5e8"></div>
<div class="a" style="left:968px;top:49px;width:112px;height:447px;background:#f6f7f9;border-top:1px solid #eceef1"></div>
<svg style="left:972px;top:32.5px" width="11" height="11"><path d="M1 0h9a1 1 0 0 1 1 1v6.5a1 1 0 0 1-1 1H5L2.5 10.5V8.5H1a1 1 0 0 1-1-1V1a1 1 0 0 1 1-1z" fill="#8a8d92"/><circle cx="3" cy="4.2" r="0.9" fill="#fff"/><circle cx="5.5" cy="4.2" r="0.9" fill="#fff"/><circle cx="8" cy="4.2" r="0.9" fill="#fff"/></svg>
<div class="t" style="left:987px;top:32.5px;font-size:10.5px;color:#333">聊天</div>

<div class="cb" style="top:50px">周杨</div>
<div class="ck" style="top:71px">好厉害</div>
<div class="cb" style="top:92px">22级地科一班胡永雪</div>
<div class="ck" style="top:113px">看到了</div>
<div class="cb" style="top:135px">李然</div>
<div class="ck" style="top:156px">看得到</div>
<div class="cb" style="top:178px">22届地科1班黄怡宁</div>
<div class="ck" style="top:199px">看得到</div>
<div class="cb" style="top:221px">农区2班14陈艳芬</div>
<div class="ck" style="top:242px">可以</div>
<div class="cb" style="top:265px">唐飞|林闽俊伙伴 | 大</div>
<div class="ck" style="top:286px">可以看到</div>
<div class="cb" style="top:307px">20级工程管理一班胡</div>
<div class="ck" style="top:329px">可以</div>
<div class="cb" style="top:351px">地理科学3班郑义凯</div>
<div class="ck" style="top:372px">可以</div>
<div class="cb" style="top:393px">21工程冉艺佳</div>
<div class="ck" style="top:415px">可以</div>
<div class="cb" style="top:437px">管科4周一鑫47</div>
<div class="ck" style="top:458px">我们也可以自己放大</div>
<!-- muted mic floating -->
<div class="a" style="left:1055px;top:55px;width:30px;height:30px;background:#2b2d31;border-radius:4px"></div>
<svg style="left:1064px;top:63px" width="12" height="14"><rect x="3" y="0" width="6" height="9" rx="3" fill="#8b8e93"/><path d="M1 6.5a5 5 0 0 0 10 0M6 11.5v2M3.5 13.5h5" fill="none" stroke="#8b8e93" stroke-width="1"/><path d="M0.5 13L11.5 1" stroke="#d9443c" stroke-width="1.2"/></svg>

<div class="t" style="left:977px;top:504px;font-size:11px;color:#222">发送至:</div>
<div class="t" style="left:1025px;top:503.5px;font-size:11.3px;color:#2079f3">所有人</div>
<svg style="left:1065px;top:507px" width="5" height="4"><path d="M0 0h5L2.5 3.5z" fill="#2079f3"/></svg>
<div class="t" style="left:976px;top:524px;font-size:11px;color:#c8c8c8">请输入消息...</div>
</body></html>
